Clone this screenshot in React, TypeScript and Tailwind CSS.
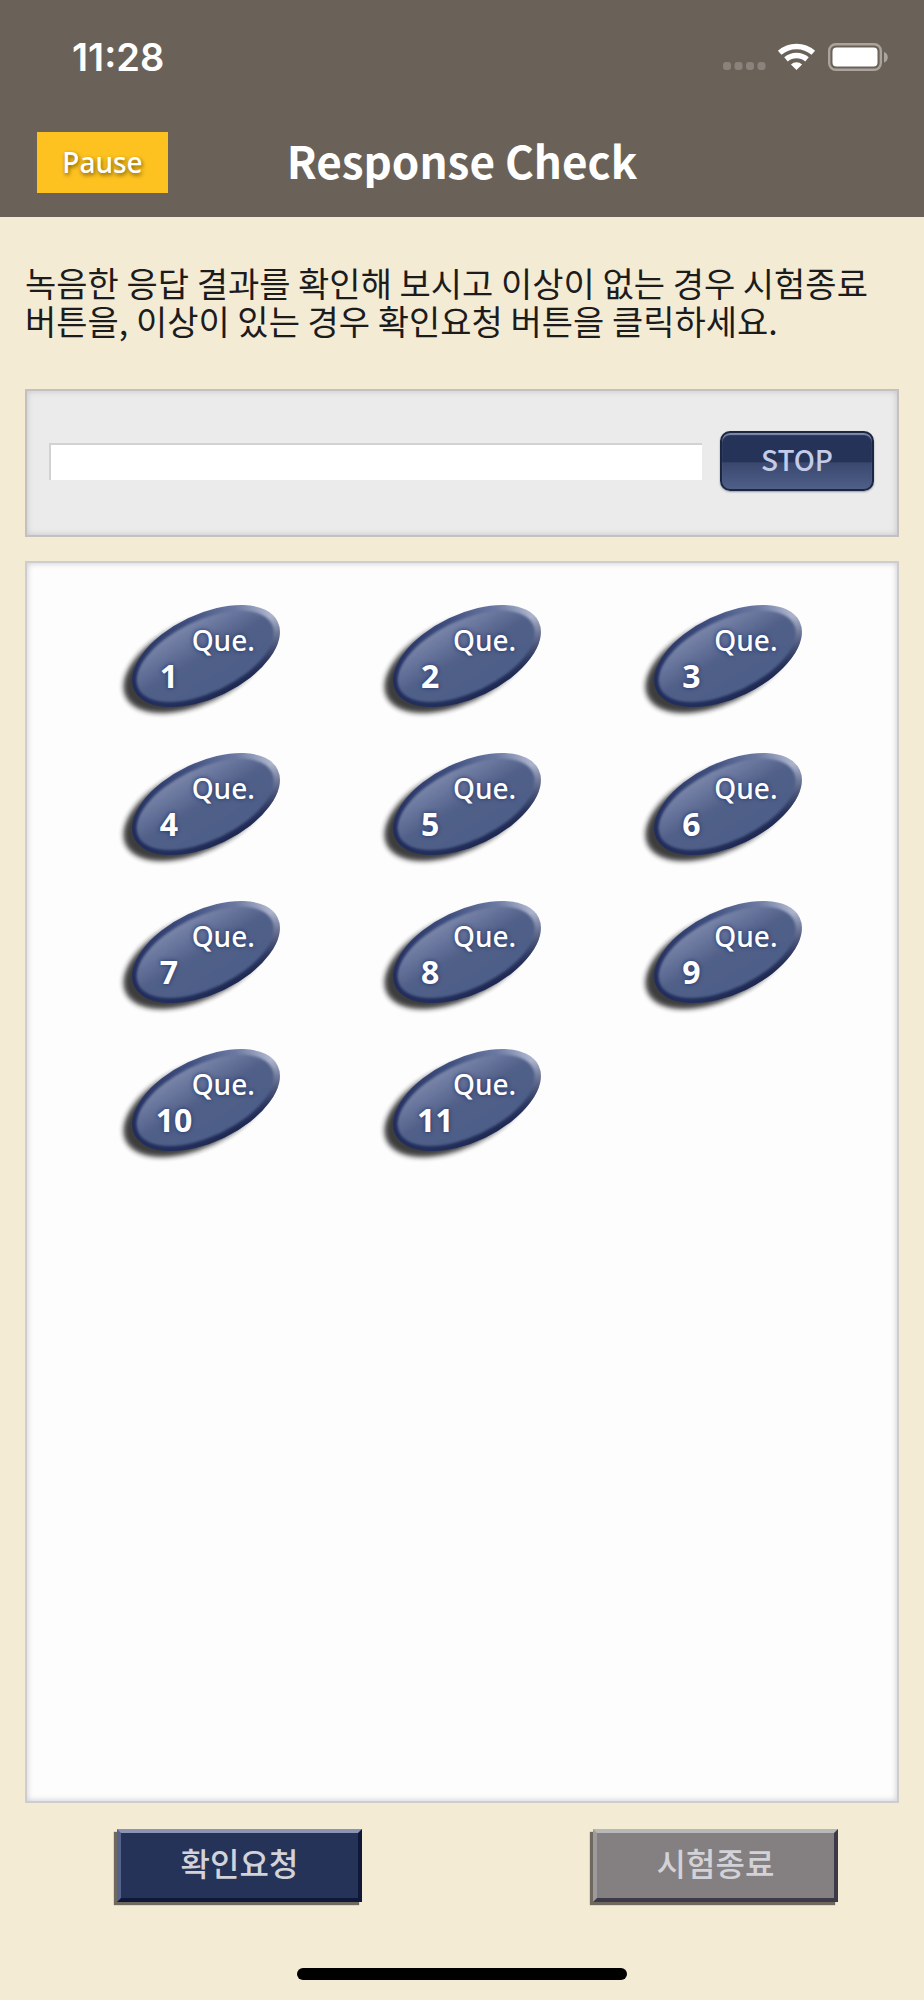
import React, { useState } from 'react';

const QUESTIONS = [1, 2, 3, 4, 5, 6, 7, 8, 9, 10, 11];

const StatusBar: React.FC = () => (
  <div className="flex h-[114px] items-center justify-between pr-[36px] pl-[72px]">
    <time className="font-['Inter',sans-serif] text-[38px] leading-[44px] font-semibold">11:28</time>
    <svg width="166" height="30" viewBox="0 0 166 30" aria-hidden="true">
      <g fill="#8b837b">
        <rect x="1" y="20" width="8" height="8" rx="3" />
        <rect x="12.5" y="20" width="8" height="8" rx="3" />
        <rect x="24" y="20" width="8" height="8" rx="3" />
        <rect x="35.5" y="20" width="8" height="8" rx="3" />
      </g>
      <g fill="none" stroke="#fff" strokeWidth="5.4">
        <path d="M57.7 10.8a25.4 25.4 0 0 1 33.6 0" />
        <path d="M64 17.4a16 16 0 0 1 21 0" />
      </g>
      <path d="M74.5 28l-5.6-5.6a8.4 8.4 0 0 1 11.2 0z" fill="#fff" />
      <rect x="107.2" y="2.2" width="51.6" height="25.6" rx="6.5" fill="none" stroke="#aaa49d" strokeWidth="2.4" />
      <rect x="110.5" y="5.5" width="45" height="19" rx="4" fill="#fff" />
      <path d="M162 10c5 1.5 5 9 0 10.5z" fill="#aaa49d" />
    </svg>
  </div>
);

const OvalShape: React.FC = () => (
  <svg className="absolute inset-0" width="166" height="116" viewBox="0 0 166 116" aria-hidden="true">
    <defs>
      <linearGradient id="rim" x1="0" y1="0" x2="1" y2="0">
        <stop offset="0" stopColor="#202c5c" />
        <stop offset="0.5" stopColor="#3f4f80" />
        <stop offset="0.8" stopColor="#6c7aa2" />
        <stop offset="1" stopColor="#b4bbd2" />
      </linearGradient>
      <linearGradient id="edge" x1="0.4" y1="0" x2="0.6" y2="1">
        <stop offset="0.5" stopColor="#1c2750" stopOpacity="0" />
        <stop offset="1" stopColor="#1c2750" />
      </linearGradient>
      <linearGradient id="face" x1="0.3" y1="0" x2="0.5" y2="1">
        <stop offset="0" stopColor="#7c88aa" />
        <stop offset="0.25" stopColor="#66739b" />
        <stop offset="0.5" stopColor="#516088" />
        <stop offset="1" stopColor="#4d5f89" />
      </linearGradient>
      <filter id="shade" x="-20%" y="-20%" width="140%" height="140%">
        <feGaussianBlur stdDeviation="2.5" />
      </filter>
      <filter id="soft" x="-20%" y="-20%" width="140%" height="140%">
        <feGaussianBlur stdDeviation="1.2" />
      </filter>
    </defs>
    <ellipse cx="79" cy="60" rx="78" ry="41" transform="rotate(-25.6 79 60)" fill="#1c1c1c" opacity="0.85" filter="url(#shade)" />
    <g transform="rotate(-25.6 89 53)">
      <ellipse cx="89" cy="53" rx="79.5" ry="41.8" fill="url(#rim)" />
      <ellipse cx="89" cy="53" rx="79.5" ry="41.8" fill="url(#edge)" />
      <ellipse cx="88" cy="53" rx="74" ry="36" fill="url(#face)" filter="url(#soft)" />
    </g>
  </svg>
);

interface QuestionButtonProps {
  number: number;
  onSelect: (n: number) => void;
}

const QuestionButton: React.FC<QuestionButtonProps> = ({ number, onSelect }) => (
  <button
    type="button"
    onClick={() => onSelect(number)}
    className="relative flex h-[116px] w-[166px] flex-col pt-[18px] text-left font-['Noto_Sans','Open_Sans',sans-serif] text-white [text-shadow:0_0_4px_#1f2f66]"
  >
    <OvalShape />
    <span className="relative pl-[75px] text-[28px] leading-[38px] font-medium">
      Que.
    </span>
    <span className={`relative text-[32px] leading-[34px] font-bold ${number > 9 ? 'pl-[39px]' : 'pl-[43px]'}`}>
      {number}
    </span>
  </button>
);

export default function App() {
  const [current, setCurrent] = useState<number | null>(null);

  return (
    <div className="flex min-h-screen flex-col bg-[#f4ebd5] font-['Noto_Sans_CJK_KR',sans-serif]">
      <header className="bg-[#6a6258] pb-[6px] text-white">
        <StatusBar />
        <div className="grid h-[97px] grid-cols-[1fr_auto_1fr] items-center px-[37px]">
          <button
            type="button"
            className="h-[61px] w-[131px] bg-[#fdc220] pb-[2px] font-['Noto_Sans',sans-serif] text-[28px] font-medium [text-shadow:1px_2px_4px_#7a5a00]"
          >
            Pause
          </button>
          <h1 className="pb-[6px] text-[44px] leading-[60px] font-bold">Response Check</h1>
        </div>
      </header>

      <main className="flex flex-1 flex-col px-[25px] pt-[47px]">
        <p className="text-[34px] leading-[38px] break-keep text-[#1c1c1c]">
          녹음한 응답 결과를 확인해 보시고 이상이 없는 경우 시험종료 버튼을, 이상이 있는 경우 확인요청 버튼을 클릭하세요.
        </p>

        <section className="mt-[49px] flex h-[148px] items-center gap-[18px] border-2 border-[#c4c0c0] bg-[#ebebeb] pr-[23px] pb-[4px] pl-[22px] shadow-[inset_0_0_6px_#c4c4c8]">
          <input
            type="text"
            readOnly
            aria-label="재생"
            className="h-[37px] min-w-0 flex-1 border-t-2 border-l-2 border-[#d2d2d2] bg-white outline-none"
          />
          <button
            type="button"
            onClick={() => setCurrent(null)}
            className="h-[60px] w-[154px] rounded-[10px] border-2 border-[#1d2640] bg-linear-to-b from-[#253358] from-52% via-[#3a486f] via-53% to-[#4f5f88] pb-[4px] text-[28px] leading-[40px] font-medium text-[#c3cbe8] shadow-[inset_0_2px_1px_#7f8bab,0_1px_2px_#8f98ac]"
          >
            STOP
          </button>
        </section>

        <section className="mt-[24px] flex-1 border-2 border-[#ceccce] bg-[#fdfdfd] pt-[40px] pr-[44px] pl-[42px] shadow-[inset_0_0_6px_#c8c8d0]">
          <div className="grid grid-cols-3 justify-items-center gap-y-[32px]">
            {QUESTIONS.map((n) => (
              <QuestionButton key={n} number={n} onSelect={setCurrent} />
            ))}
          </div>
        </section>
      </main>

      <footer>
        <div className="flex justify-between pt-[26px] pr-[86px] pl-[117px] text-[32px] leading-[40px] font-medium text-[#d3d2d8]">
          <button
            type="button"
            className="h-[73px] w-[245px] border-4 border-t-[#8b94b3] border-r-[#10183a] border-b-[#10183a] border-l-[#55638c] bg-[#253358] pb-[8px] shadow-[-3px_3px_1px_#6f685e]"
          >
            확인요청
          </button>
          <button
            type="button"
            disabled={current !== null}
            className="h-[73px] w-[245px] border-4 border-t-[#b9b8b8] border-r-[#3c3a48] border-b-[#3c3a48] border-l-[#9c9a9b] bg-[#848081] pb-[8px] shadow-[-3px_3px_1px_#6f685e]"
          >
            시험종료
          </button>
        </div>
        <div className="mx-auto mt-[66px] mb-[20px] h-[12px] w-[330px] rounded-full bg-black" />
      </footer>
    </div>
  );
}
